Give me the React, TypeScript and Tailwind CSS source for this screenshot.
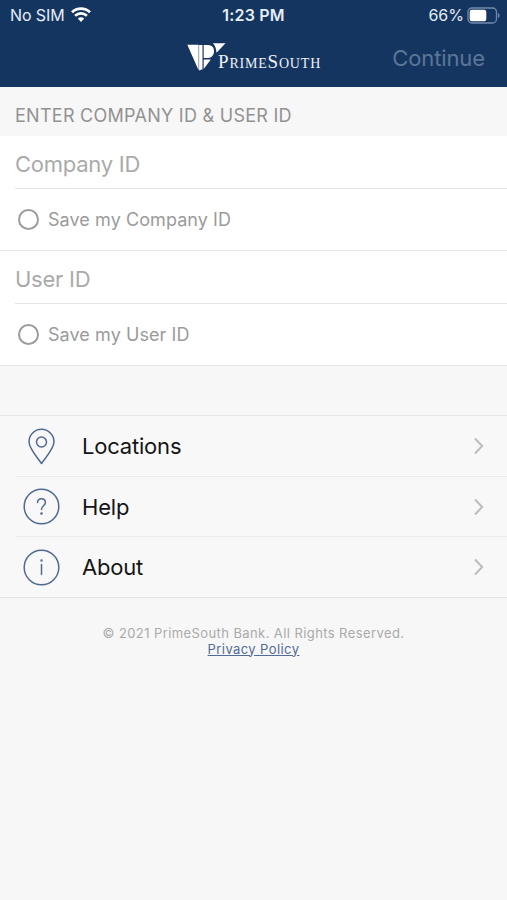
import type { ReactNode } from 'react';

function StatusBar() {
  return (
    <div className="grid h-[30px] grid-cols-3 items-center text-[16px] leading-[30px] text-[#e6edf5]">
      <div className="flex items-center pl-[10px]">
        <span className="w-[54px] whitespace-nowrap tracking-[-0.1px]">No SIM</span>
        <svg className="ml-[7px] h-[16px] w-[20px]" viewBox="0 0 20 16" fill="none" stroke="#fff" strokeWidth="2.7">
          <path d="M1 5.2C6 .4 14 .4 19 5.2" />
          <path d="M4.1 8.7c3.4-3.1 8.4-3.1 11.8 0" />
          <path d="M6.8 11.5C8.7 9.7 11.3 9.7 13.2 11.5L10 14.9z" fill="#fff" stroke="none" />
        </svg>
      </div>
      <div className="text-center font-semibold tracking-[0.2px]">1:23 PM</div>
      <div className="flex items-center justify-end pr-[7px]">
        <span className="whitespace-nowrap">66%</span>
        <svg className="ml-[3px] h-[17px] w-[33px]" viewBox="0 0 33 17">
          <rect x="1" y="1" width="28.5" height="15" rx="4" fill="none" stroke="#718aa9" strokeWidth="1.3" />
          <rect x="2.7" y="2.8" width="16.6" height="11.4" rx="2.2" fill="#fff" />
          <path d="M31 6c2 .8 2 4.2 0 5z" fill="#718aa9" />
        </svg>
      </div>
    </div>
  );
}

function Logo() {
  return (
    <div className="flex items-start">
      <svg className="h-[30px] w-[39px]" viewBox="0 0 39 30" fill="#fff">
        <path d="M.3 2.7H11.6V28.2z" />
        <path d="M12.1 2.9H15.5V27.2L12.1 28.4z" />
        <path d="M16.7 2.9H20.5C25 2.9 27 5.3 27 9.2S24.500 16 20.500 16H16.700z" />
        <path d="M16.700 17.500H23.800L16.700 27z" />
        <path d="M25.800 1.200H38.500L29.500 10.800C29.200 6.500 28.200 3.500 25.800 1.200z" />
      </svg>
      <span className="-ml-[8px] mt-[8px] whitespace-nowrap font-['Liberation_Serif',serif] text-[14px] leading-[24px] tracking-[0.8px] text-[#edf2f7]">
        <span className="text-[19px]">P</span>RIME<span className="text-[19px]">S</span>OUTH
      </span>
    </div>
  );
}

function Field({ label }: { label: string }) {
  return (
    <div className="ml-[15px] h-[53px] border-b border-[#e5e5e5] pt-[1px] text-[22px] leading-[54px] tracking-[-0.25px] text-[#aaa]">
      {label}
    </div>
  );
}

function SaveOption({ label }: { label: string }) {
  return (
    <div className="flex h-[62px] items-center border-b border-[#e8e8e8] pl-[18px] text-[#9b9b9b]">
      <span className="h-[21px] w-[21px] rounded-full border-2 border-[#9c9c9c]" />
      <span className="ml-[9px] text-[18px] tracking-[0.07px]">{label}</span>
    </div>
  );
}

function MenuRow({ label, icon, last = false }: { label: string; icon: ReactNode; last?: boolean }) {
  return (
    <div className="relative flex h-[60.5px] items-center pl-[23px] pr-[22px]">
      <svg className="h-[37px] w-[37px]" viewBox="0 0 37 37" fill="none" stroke="#506b91" strokeWidth="1.5" strokeLinecap="round" strokeLinejoin="round">
        {icon}
      </svg>
      <span className="ml-[22px] flex-1 text-[22px] leading-[30px] tracking-[-0.2px] text-[#151515]">{label}</span>
      <svg className="h-[18px] w-[12px]" viewBox="0 0 12 18" fill="none" stroke="#bdbdbd" strokeWidth="2">
        <path d="M2 1.5L9.2 9L2 16.5" />
      </svg>
      <div className={last ? 'absolute bottom-0 left-0 right-0 h-px bg-[#e5e5e5]' : 'absolute bottom-0 left-[15px] right-0 h-px bg-[#ebebeb]'} />
    </div>
  );
}

export default function App() {
  return (
    <main className="h-[900px] w-[507px] overflow-hidden bg-[#f7f7f7] font-['Inter',sans-serif]">
      <header className="h-[87px] bg-[#153561]">
        <StatusBar />
        <div className="flex h-[57px] justify-between">
          <div className="ml-[187px] mt-[12px]">
            <Logo />
          </div>
          <span className="mr-[22px] mt-[11px] text-[22px] leading-[34px] tracking-[-0.1px] text-[#5c7698]">Continue</span>
        </div>
      </header>
      <h1 className="h-[49px] pl-[15px] pt-[4px] text-[18px] leading-[49px] tracking-[0.27px] text-[#929292]">ENTER COMPANY ID &amp; USER ID</h1>
      <section className="bg-white">
        <Field label="Company ID" />
        <SaveOption label="Save my Company ID" />
        <Field label="User ID" />
        <SaveOption label="Save my User ID" />
      </section>
      <nav className="mt-[49px] border-t border-[#e7e7e7] bg-[#f8f8f8]">
        <MenuRow
          label="Locations"
          icon={
            <>
              <path d="M18.5 35.5C14 29 6 20.5 6 13.8a12.5 12.5 0 0 1 25 0C31 20.5 23 29 18.5 35.5z" />
              <circle cx="18.5" cy="14" r="5" />
            </>
          }
        />
        <MenuRow
          label="Help"
          icon={
            <>
              <circle cx="18.5" cy="18.5" r="17.3" />
              <path d="M14.6 14.5c0-5 7.8-5 7.8 0 0 3.2-3.9 3.5-3.9 7" />
              <circle cx="18.5" cy="25.5" r=".6" />
            </>
          }
        />
        <MenuRow
          label="About"
          last
          icon={
            <>
              <circle cx="18.5" cy="18.5" r="17.3" />
              <path d="M18.5 15.5V25.5" />
              <circle cx="18.5" cy="11.5" r=".5" />
            </>
          }
        />
      </nav>
      <footer className="pt-[27px] text-center text-[13px] leading-[16px] tracking-[0.41px] text-[#aaa]">
        <p>© 2021 PrimeSouth Bank. All Rights Reserved.</p>
        <p>
          <a className="text-[#526b98] underline">Privacy Policy</a>
        </p>
      </footer>
    </main>
  );
}
